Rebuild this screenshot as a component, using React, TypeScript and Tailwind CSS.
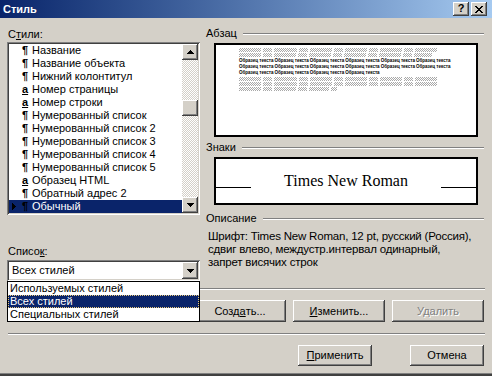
import React from "react";

const raised =
  "bg-[#d4d0c8] shadow-[inset_-1px_-1px_0_#404040,inset_1px_1px_0_#ffffff,inset_-2px_-2px_0_#808080]";
const sunken =
  "bg-white p-[2px] shadow-[inset_1px_1px_0_#808080,inset_-1px_-1px_0_#ffffff,inset_2px_2px_0_#404040,inset_-2px_-2px_0_#d4d0c8]";

const styles: { k: "p" | "a"; n: string }[] = [
  { k: "p", n: "Название" },
  { k: "p", n: "Название объекта" },
  { k: "p", n: "Нижний колонтитул" },
  { k: "a", n: "Номер страницы" },
  { k: "a", n: "Номер строки" },
  { k: "p", n: "Нумерованный список" },
  { k: "p", n: "Нумерованный список 2" },
  { k: "p", n: "Нумерованный список 3" },
  { k: "p", n: "Нумерованный список 4" },
  { k: "p", n: "Нумерованный список 5" },
  { k: "a", n: "Образец HTML" },
  { k: "p", n: "Обратный адрес 2" },
  { k: "p", n: "Обычный" },
];

// grey "word" blocks of the preview text
const greyA = [22, 9, 23, 9, 22, 9, 22, 9, 22, 9, 22];
const greyB = [22, 9, 22, 9, 22, 9, 22, 9, 22, 9, 18];
const greyC = [22, 9, 22, 9, 20, 6];

function DownArrow() {
  return (
    <svg width="7" height="4" shapeRendering="crispEdges">
      <rect x="0" y="0" width="7" height="1" fill="#000" />
      <rect x="1" y="1" width="5" height="1" fill="#000" />
      <rect x="2" y="2" width="3" height="1" fill="#000" />
      <rect x="3" y="3" width="1" height="1" fill="#000" />
    </svg>
  );
}

function UpArrow() {
  return (
    <svg width="7" height="4" shapeRendering="crispEdges">
      <rect x="3" y="0" width="1" height="1" fill="#000" />
      <rect x="2" y="1" width="3" height="1" fill="#000" />
      <rect x="1" y="2" width="5" height="1" fill="#000" />
      <rect x="0" y="3" width="7" height="1" fill="#000" />
    </svg>
  );
}

function RightArrow() {
  return (
    <svg width="4" height="7" shapeRendering="crispEdges">
      <rect x="0" y="0" width="1" height="7" fill="#000" />
      <rect x="1" y="1" width="1" height="5" fill="#000" />
      <rect x="2" y="2" width="1" height="3" fill="#000" />
      <rect x="3" y="3" width="1" height="1" fill="#000" />
    </svg>
  );
}

function CloseGlyph() {
  const px = [
    [0, 0, 2], [6, 0, 2],
    [1, 1, 2], [5, 1, 2],
    [2, 2, 4],
    [3, 3, 2],
    [2, 4, 4],
    [1, 5, 2], [5, 5, 2],
    [0, 6, 2], [6, 6, 2],
  ];
  return (
    <svg width="8" height="7" shapeRendering="crispEdges">
      {px.map(([x, y, w], i) => (
        <rect key={i} x={x} y={y} width={w} height="1" fill="#000" />
      ))}
    </svg>
  );
}

function GroupHead({ label }: { label: string }) {
  return (
    <div className="flex h-[13px] items-center gap-[6px]">
      <span>{label}</span>
      <div className="h-[2px] flex-1 border-t border-b border-t-[#808080] border-b-white" />
    </div>
  );
}

function Btn({
  children,
  w,
  h = "h-[22px]",
  disabled,
}: {
  children?: React.ReactNode;
  w: string;
  h?: string;
  disabled?: boolean;
}) {
  return (
    <div
      className={`${raised} ${w} ${h} flex items-center justify-center ${
        disabled ? "text-[#808080] [text-shadow:1px_1px_0_#fff]" : ""
      }`}
    >
      {children}
    </div>
  );
}

function GreyRow({ widths }: { widths: number[] }) {
  return (
    <div className="flex h-[4px] gap-[2px]">
      {widths.map((w, i) => (
        <div
          key={i}
          className="h-[4px] bg-[image:repeating-conic-gradient(#a8a8a8_0_25%,#ffffff_0_50%)] bg-[length:2px_2px]"
          style={{ width: w }}
        />
      ))}
    </div>
  );
}

function TextRow({ n }: { n: number }) {
  return (
    <div className="flex h-[5px] gap-[1px] whitespace-nowrap text-[4.5px] leading-[5px] font-bold">
      {Array.from({ length: n }).map((_, i) => (
        <span key={i}>Образец текста</span>
      ))}
    </div>
  );
}

export default function App() {
  return (
    <div className="flex h-[376px] w-[492px] flex-col overflow-hidden bg-[#d4d0c8] font-['Liberation_Sans',Arial,sans-serif] text-[11px] leading-[13px] text-black">
      {/* title bar */}
      <div className="flex h-[18px] items-center bg-gradient-to-r from-[#0a246a] to-[#a6caf0] pl-[3px] pr-[5px]">
        <span className="font-bold text-white">Стиль</span>
        <div className="ml-auto flex gap-[2px]">
          <div className={`${raised} flex h-[14px] w-[16px] items-center justify-center pb-[1px] text-[11px] font-bold`}>
            ?
          </div>
          <div className={`${raised} flex h-[14px] w-[16px] items-center justify-center pr-[1px]`}>
            <CloseGlyph />
          </div>
        </div>
      </div>

      <div className="flex flex-1 flex-col pl-[7px] pr-[7px]">
        <div className="flex h-[270px]">
          {/* left column */}
          <div className="flex w-[193px] flex-col">
            <div className="ml-[1px] mt-[10px] h-[13px]">
              С<u>т</u>или:
            </div>
            <div className={`${sunken} mt-[1px] flex h-[173px]`}>
              <div className="flex flex-1 flex-col">
                {styles.map((s, i) => {
                  const sel = i === styles.length - 1;
                  return (
                    <div
                      key={s.n}
                      className={`flex h-[13px] items-center ${sel ? "bg-[#0a246a]" : ""}`}
                    >
                      <span className="flex w-[13px] pl-[3px]">{sel && <RightArrow />}</span>
                      <span className="w-[10px] font-bold text-black">
                        {s.k === "p" ? "¶" : <u>a</u>}
                      </span>
                      <span className={sel ? "text-white" : ""}>{s.n}</span>
                    </div>
                  );
                })}
              </div>
              <div className="flex w-[16px] flex-col bg-[image:repeating-conic-gradient(#d4d0c8_0_25%,#ffffff_0_50%)] bg-[length:2px_2px]">
                <div className={`${raised} flex h-[16px] items-center justify-center`}>
                  <UpArrow />
                </div>
                <div className={`${raised} mt-[40px] h-[16px]`} />
                <div className="flex-1" />
                <div className={`${raised} flex h-[16px] items-center justify-center`}>
                  <DownArrow />
                </div>
              </div>
            </div>
            <div className="ml-[1px] mt-[30px] h-[13px]">
              Списо<u>к</u>:
            </div>
            <div className="relative mt-[2px] h-[21px]">
              <div className={`${sunken} flex h-[21px]`}>
                <div className="flex flex-1 items-center pl-[3px]">Всех стилей</div>
                <div className={`${raised} flex w-[16px] items-center justify-center`}>
                  <DownArrow />
                </div>
              </div>
              {/* open dropdown */}
              <div className="absolute left-0 top-[21px] z-10 w-[193px] border border-black bg-white">
                <div className="h-[13px] pl-[2px]">Используемых стилей</div>
                <div className="h-[13px] bg-[#0a246a] pl-[2px] text-white outline-1 -outline-offset-1 outline-dotted outline-[#e8c878]">
                  Всех стилей
                </div>
                <div className="h-[13px] pl-[2px]">Специальных стилей</div>
              </div>
            </div>
          </div>

          {/* right column */}
          <div className="ml-[6px] flex w-[278px] flex-col">
            <div className="mt-[9px]">
              <GroupHead label="Абзац" />
            </div>
            <div className="ml-[8px] mt-[3px] flex h-[94px] w-[264px] flex-col gap-[1px] border-2 border-black bg-white pl-[23px] pt-[3px]">
              <GreyRow widths={greyA} />
              <GreyRow widths={greyB} />
              <TextRow n={6} />
              <TextRow n={6} />
              <TextRow n={4} />
              <div className="mt-[1px]">
                <GreyRow widths={greyA} />
              </div>
              <GreyRow widths={greyA} />
              <GreyRow widths={greyC} />
            </div>

            <div className="mt-[4px]">
              <GroupHead label="Знаки" />
            </div>
            <div className="ml-[8px] mt-[3px] flex h-[48px] w-[264px] items-center justify-between border-2 border-black bg-white">
              <div className="h-[14px] w-[35px] border-b border-black" />
              <span className="font-['Liberation_Serif',serif] text-[16px] leading-[18px]">
                Times New Roman
              </span>
              <div className="h-[14px] w-[35px] border-b border-black" />
            </div>

            <div className="mt-[7px]">
              <GroupHead label="Описание" />
            </div>
            <div className="mt-[5px] whitespace-nowrap pl-[2px] text-[11.5px] leading-[13px] tracking-[-0.2px]">
              Шрифт: Times New Roman, 12 pt, русский (Россия),
              <br />
              сдвиг влево, междустр.интервал одинарный,
              <br />
              запрет висячих строк
            </div>
          </div>
        </div>

        <div className="ml-[1px] h-[2px] border-t border-b border-t-[#808080] border-b-white" />

        <div className="mt-[10px] flex justify-end gap-[7px] pr-[1px]">
          <Btn w="w-[92px]" />
          <Btn w="w-[92px]">
            Созд<u>а</u>ть...
          </Btn>
          <Btn w="w-[92px]">
            <u>И</u>зменить...
          </Btn>
          <Btn w="w-[92px]" disabled>
            Удалить
          </Btn>
        </div>

        <div className="ml-[1px] mt-[11px] h-[2px] border-t border-b border-t-[#808080] border-b-white" />

        <div className="mt-[10px] flex justify-end gap-[38px] pr-[1px]">
          <Btn w="w-[74px]" h="h-[21px]">
            <u>П</u>рименить
          </Btn>
          <Btn w="w-[74px]" h="h-[21px]">
            Отмена
          </Btn>
        </div>
      </div>

      <div className="h-[3px] border-t border-[#808080] bg-[#404040]" />
    </div>
  );
}
